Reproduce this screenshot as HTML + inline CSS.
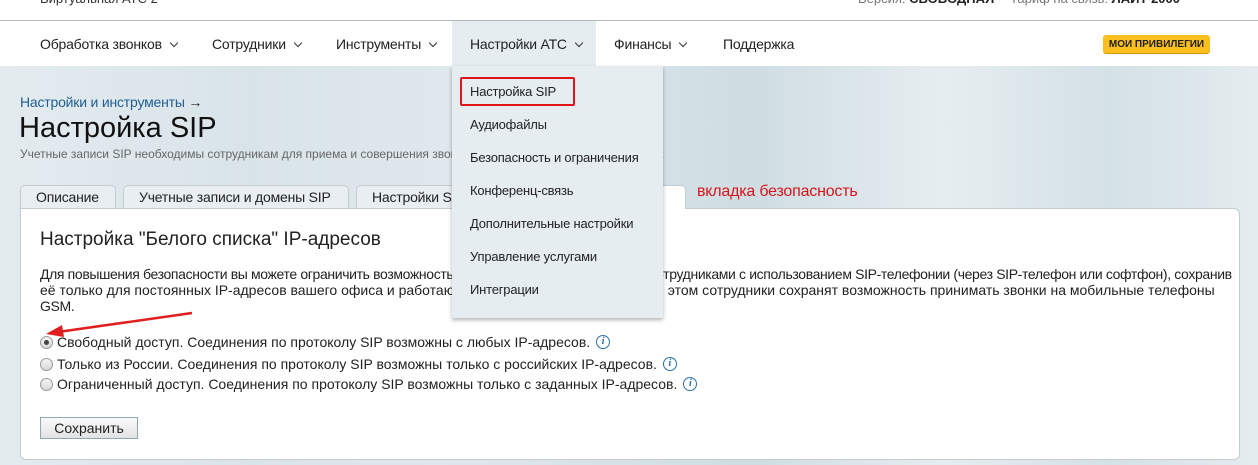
<!DOCTYPE html>
<html><head><meta charset="utf-8"><style>
*{margin:0;padding:0;box-sizing:border-box}
body{width:1258px;height:465px;overflow:hidden;position:relative;font-family:"Liberation Sans",sans-serif;background:linear-gradient(90deg,#e3ebef 0%,#d9e4e9 20%,#dfe8ec 35%,#cfdde3 60%,#e6edf0 75%,#d4e1e6 88%,#e4ecef 100%);color:#222}
.a{position:absolute;white-space:nowrap}
.top{left:0;top:0;width:1258px;height:21px;background:#fff;border-bottom:1px solid #b8b8b8}
.nav{left:0;top:21px;width:1258px;height:45px;background:#fff}
.nv{font-size:14px;color:#222;top:36px;letter-spacing:-0.2px}
.chev{display:inline-block;width:6px;height:6px;border-right:1.3px solid #333;border-bottom:1.3px solid #333;transform:rotate(45deg);margin-left:9px;position:relative;top:-3px}
.tab{top:185px;height:24px;background:#e8eef1;border:1px solid #c3ccd0;border-bottom:none;border-radius:5px 5px 0 0;font-size:14px;padding:3px 15px 0;color:#222;letter-spacing:-0.2px}
.dd{font-size:13px;color:#222;left:470px;letter-spacing:-0.2px}
.r{font-size:14px;left:57px;color:#222;line-height:16px}
.rb{left:40px;width:13px;height:13px;border-radius:50%;border:1px solid #999;background:linear-gradient(#f4f4f4,#d8d8d8)}
.info{display:inline-block;width:14px;height:14px;border:1px solid #2a6fa8;border-radius:50%;color:#2a6fa8;font:italic bold 10px/12px "Liberation Serif",serif;text-align:center;margin-left:6px;vertical-align:middle;position:relative;top:-1px}
</style></head><body>
<div class="a top"></div>
<div class="a" style="left:40px;top:-9px;font-size:13px;color:#333">Виртуальная АТС 2</div>
<div class="a" style="left:858px;top:-9px;font-size:13px;color:#777">Версия: <b style="color:#222">СВОБОДНАЯ</b></div>
<div class="a" style="left:1010px;top:-9px;font-size:13px;color:#777">Тариф на связь: <b style="color:#222">ЛАЙТ 2000</b></div>
<div class="a nav"></div>
<div class="a" style="left:452px;top:21px;width:144px;height:45px;background:#e6edf1"></div>
<div class="a nv" style="left:40px">Обработка звонков<span class="chev"></span></div>
<div class="a nv" style="left:212px">Сотрудники<span class="chev"></span></div>
<div class="a nv" style="left:336px">Инструменты<span class="chev"></span></div>
<div class="a nv" style="left:470px">Настройки АТС<span class="chev"></span></div>
<div class="a nv" style="left:614px">Финансы<span class="chev"></span></div>
<div class="a nv" style="left:723px">Поддержка</div>
<div class="a" style="left:1103px;top:35px;width:107px;height:19px;background:#fbbf1e;border-radius:3px;font-size:10px;font-weight:bold;color:#222;text-align:center;line-height:19px;border-bottom:1px solid #d99a00">МОИ ПРИВИЛЕГИИ</div>

<div class="a" style="left:20px;top:94px;font-size:14px;color:#1f5e93;letter-spacing:-0.2px">Настройки и инструменты <span style="color:#222">→</span></div>
<div class="a" style="left:19px;top:112px;font-size:29px;color:#111">Настройка SIP</div>
<div class="a" style="left:20px;top:147px;font-size:12px;color:#666">Учетные записи SIP необходимы сотрудникам для приема и совершения звонков с использованием IP-телефонии.</div>

<div class="a tab" style="left:20px;width:96px">Описание</div>
<div class="a tab" style="left:123px;width:226px">Учетные записи и домены SIP</div>
<div class="a tab" style="left:356px;width:200px">Настройки SIP-телефонов</div>
<div class="a tab" style="left:560px;width:126px;background:#fff;height:25px">Безопасность</div>
<div class="a" style="left:697px;top:183px;font-size:16px;color:#d4161b;letter-spacing:-0.2px">вкладка безопасность</div>

<div class="a" style="left:20px;top:208px;width:1220px;height:252px;background:#fff;border:1px solid #c3ccd0;border-radius:0 6px 6px 6px"></div>
<div class="a" style="left:561px;top:207px;width:124px;height:3px;background:#fff"></div>
<div class="a" style="left:40px;top:229px;font-size:19px;color:#222">Настройка "Белого списка" IP-адресов</div>
<div class="a" style="left:40px;top:266px;font-size:14px;line-height:16px;color:#222;letter-spacing:-0.36px">Для повышения безопасности вы можете ограничить возможность совершения и приема звонков сотрудниками с использованием SIP-телефонии (через SIP-телефон или софтфон), сохранив<br><span style="letter-spacing:0">её только для постоянных IP-адресов вашего офиса и работающих удаленно сотрудников. При этом сотрудники сохранят возможность принимать звонки на мобильные телефоны</span><br>GSM.</div>

<div class="a rb" style="top:336px"><div style="position:absolute;left:3px;top:3px;width:5px;height:5px;border-radius:50%;background:#444"></div></div>
<div class="a r" style="top:334px">Свободный доступ. Соединения по протоколу SIP возможны с любых IP-адресов.<span class="info">i</span></div>
<div class="a rb" style="top:358px"></div>
<div class="a r" style="top:356px">Только из России. Соединения по протоколу SIP возможны только с российских IP-адресов.<span class="info">i</span></div>
<div class="a rb" style="top:378px"></div>
<div class="a r" style="top:376px">Ограниченный доступ. Соединения по протоколу SIP возможны только с заданных IP-адресов.<span class="info">i</span></div>
<div class="a" style="left:40px;top:417px;width:98px;height:22px;border:1px solid #8fa9ad;background:linear-gradient(#fafafa,#e2e2e2);font-size:14px;text-align:center;line-height:20px;color:#222">Сохранить</div>

<svg class="a" style="left:40px;top:310px" width="160" height="30"><line x1="152" y1="3" x2="18" y2="22" stroke="#e01f1f" stroke-width="2.5"/><polygon points="6,24 22,15 24,27" fill="#e01f1f"/></svg>

<div class="a" style="left:452px;top:66px;width:211px;height:252px;background:#e6edf1;box-shadow:0 2px 4px rgba(0,0,0,.3)"></div>
<div class="a" style="left:460px;top:77px;width:115px;height:29px;border:2px solid #e0141c;border-radius:2px"></div>
<div class="a dd" style="top:84px">Настройка SIP</div>
<div class="a dd" style="top:117px">Аудиофайлы</div>
<div class="a dd" style="top:150px">Безопасность и ограничения</div>
<div class="a dd" style="top:183px">Конференц-связь</div>
<div class="a dd" style="top:216px">Дополнительные настройки</div>
<div class="a dd" style="top:249px">Управление услугами</div>
<div class="a dd" style="top:282px">Интеграции</div>
</body></html>
